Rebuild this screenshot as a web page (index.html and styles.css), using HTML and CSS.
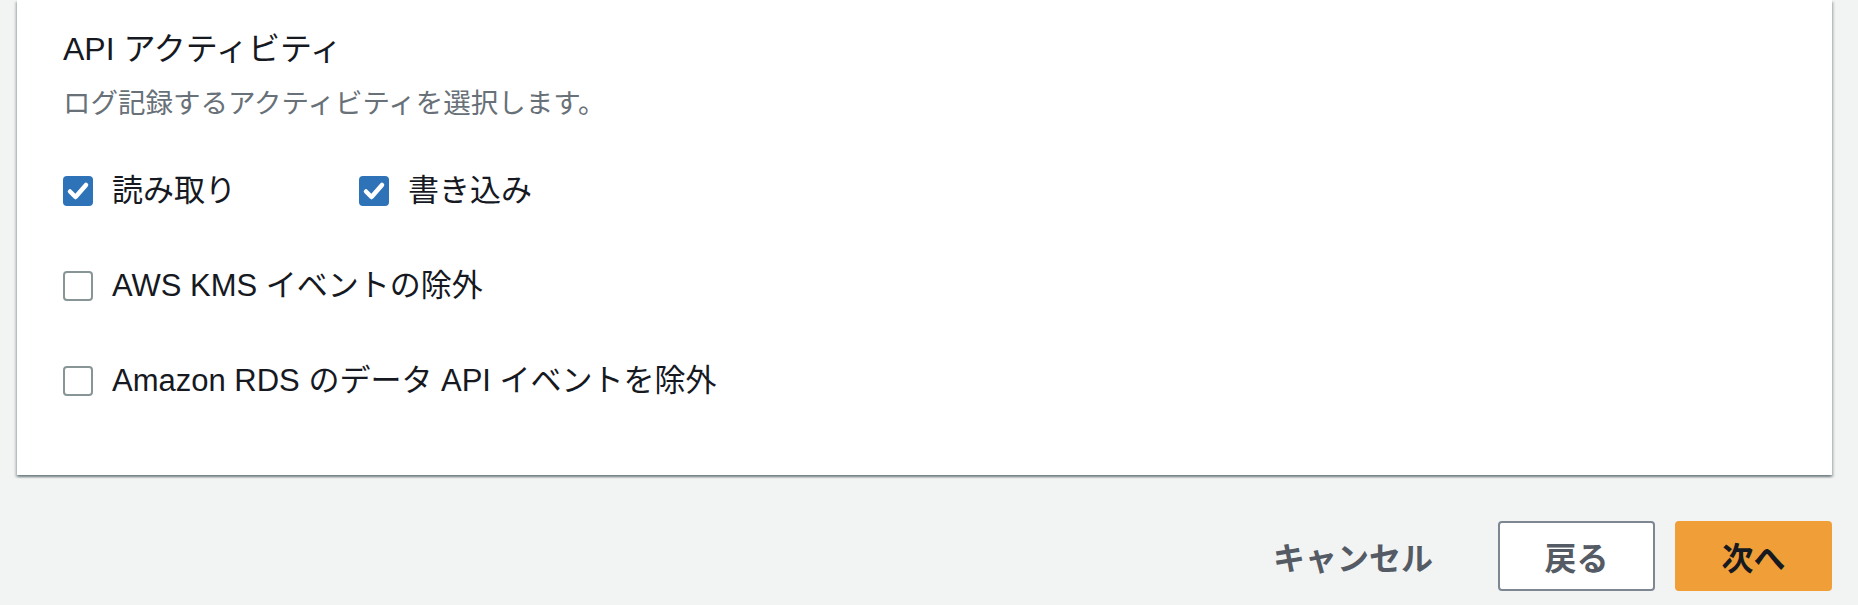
FILE: index.html
```html
<!DOCTYPE html>
<html lang="ja">
<head>
<meta charset="utf-8">
<title>API アクティビティ</title>
<link rel="stylesheet" href="styles.css">
</head>
<body>
<div class="page">
  <section class="card">
    <h2 class="field-label">API アクティビティ</h2>
    <p class="field-desc">ログ記録するアクティビティを選択します。</p>
    <div class="check-row two-col">
      <label class="check">
        <span class="box checked"><svg viewBox="0 0 30 30" width="30" height="30"><polyline points="7,15.5 12.5,21 23,9" fill="none" stroke="#fff" stroke-width="4.5" stroke-linecap="round" stroke-linejoin="round"/></svg></span>
        <span class="text">読み取り</span>
      </label>
      <label class="check">
        <span class="box checked"><svg viewBox="0 0 30 30" width="30" height="30"><polyline points="7,15.5 12.5,21 23,9" fill="none" stroke="#fff" stroke-width="4.5" stroke-linecap="round" stroke-linejoin="round"/></svg></span>
        <span class="text">書き込み</span>
      </label>
    </div>
    <div class="check-row">
      <label class="check">
        <span class="box"></span>
        <span class="text">AWS KMS イベントの除外</span>
      </label>
    </div>
    <div class="check-row">
      <label class="check">
        <span class="box"></span>
        <span class="text">Amazon RDS のデータ API イベントを除外</span>
      </label>
    </div>
  </section>
  <div class="actions">
    <button class="btn link">キャンセル</button>
    <button class="btn normal">戻る</button>
    <button class="btn primary">次へ</button>
  </div>
</div>
</body>
</html>
```

FILE: styles.css
```css
html, body {
  margin: 0;
  padding: 0;
  background: #f2f3f3;
}
body {
  font-family: "Liberation Sans", "Noto Sans CJK JP", sans-serif;
  color: #16191f;
  height: 605px;
  overflow: hidden;
}
.page {
  padding: 0 26px 0 17px;
}
.card {
  background: #fff;
  padding: 29px 46px 74px 46px;
  box-shadow: 0 2px 2px rgba(0, 28, 36, 0.35), 2px 2px 2px rgba(0, 28, 36, 0.15), -2px 2px 2px rgba(0, 28, 36, 0.15);
}
.field-label {
  margin: 0;
  font-size: 32px;
  line-height: 40px;
  font-weight: normal;
  color: #16191f;
}
.field-desc {
  margin: 17px 0 0 0;
  font-size: 27.5px;
  line-height: 36px;
  color: #687078;
}
.check-row {
  margin-top: 55px;
  display: flex;
}
.check-row.two-col {
  margin-top: 49px;
  display: grid;
  grid-template-columns: 296px auto;
}
.check {
  display: flex;
  align-items: center;
  gap: 19px;
  height: 40px;
  font-size: 31px;
  line-height: 40px;
}
.box {
  width: 30px;
  height: 30px;
  box-sizing: border-box;
  border: 2px solid #879596;
  border-radius: 4px;
  background: #fff;
  display: flex;
  align-items: center;
  justify-content: center;
  flex: none;
}
.box.checked {
  border: none;
  background: #2e73b8;
}
.box svg {
  display: block;
}
.actions {
  display: flex;
  justify-content: flex-end;
  align-items: center;
  gap: 20px;
  margin-top: 46px;
}
.btn {
  font-family: "Liberation Sans", "Noto Sans CJK JP", sans-serif;
  font-size: 32px;
  font-weight: bold;
  height: 70px;
  box-sizing: border-box;
  border-radius: 4px;
  cursor: pointer;
  padding: 0;
}
.btn.link {
  background: transparent;
  border: none;
  color: #545b64;
  padding: 0 45px 0 40px;
}
.btn.normal {
  width: 157px;
  background: #fff;
  border: 2px solid #7d8793;
  color: #545b64;
}
.btn.primary {
  width: 157px;
  background: #f09e38;
  border: none;
  color: #16191f;
}
```
